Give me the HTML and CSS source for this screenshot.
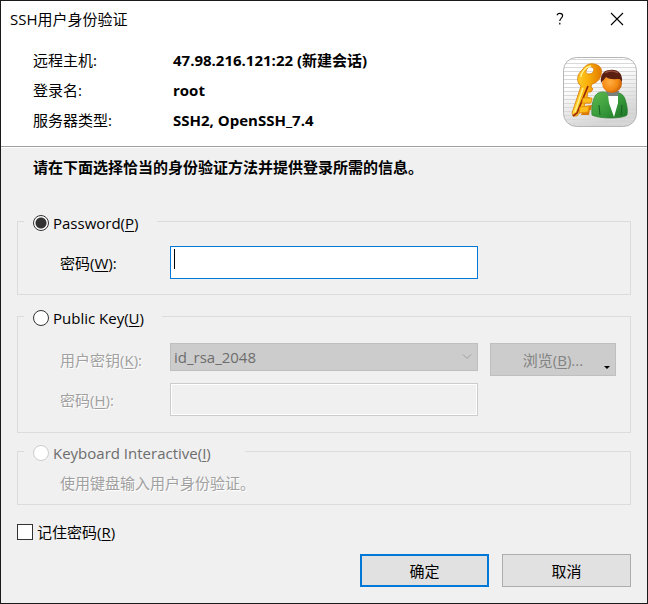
FILE: index.html
```html
<!DOCTYPE html>
<html lang="zh-CN">
<head>
  <meta charset="UTF-8">
  <meta name="viewport" content="width=device-width, initial-scale=1.0">
  <title>SSH用户身份验证</title>
  <link rel="stylesheet" href="styles.css">
</head>
<body>
  <form class="dialog">
    <header class="header">
      <div class="titlebar">
        <h1>SSH用户身份验证</h1>
        <button type="button" class="title-btn" aria-label="帮助">
          <svg width="14" height="14" viewBox="0 0 14 14" fill="none" stroke="#000" stroke-width="1.2">
            <path d="M4 3.2C4.4 2 5.4 1.3 6.8 1.3C8.6 1.3 9.6 2.3 9.6 3.8C9.6 6 6.8 6.4 6.8 9M6.8 10.8V12.4" />
          </svg>
        </button>
        <button type="button" class="title-btn" aria-label="关闭">
          <svg width="14" height="14" viewBox="0 0 14 14" fill="none" stroke="#000" stroke-width="1.1">
            <path d="M1 1L13 13M13 1L1 13" />
          </svg>
        </button>
      </div>
      <div class="summary">
        <dl class="info">
          <dt>远程主机:</dt>
          <dd>47.98.216.121:22 (新建会话)</dd>
          <dt>登录名:</dt>
          <dd>root</dd>
          <dt>服务器类型:</dt>
          <dd>SSH2, OpenSSH_7.4</dd>
        </dl>
        <svg class="auth-icon" width="74" height="70" viewBox="0 0 74 70" aria-hidden="true">
          <defs>
            <linearGradient id="tile" x1="0" y1="0" x2="0.4" y2="1">
              <stop offset="0.4" stop-color="#fff" />
              <stop offset="1" stop-color="#d4d4d4" />
            </linearGradient>
            <pattern id="lines" width="4" height="4" patternUnits="userSpaceOnUse">
              <rect width="4" height="1" y="2" fill="#d9d9d9" />
            </pattern>
            <linearGradient id="gold" x1="0" y1="0" x2="1" y2="0">
              <stop offset="0" stop-color="#ffd83a" />
              <stop offset="0.5" stop-color="#fbb40c" />
              <stop offset="1" stop-color="#e37a00" />
            </linearGradient>
            <radialGradient id="face" cx="0.4" cy="0.45" r="0.65">
              <stop offset="0" stop-color="#ffad42" />
              <stop offset="0.6" stop-color="#f48a12" />
              <stop offset="1" stop-color="#b9570a" />
            </radialGradient>
            <linearGradient id="coat" x1="0" y1="0" x2="1" y2="1">
              <stop offset="0" stop-color="#5fba4e" />
              <stop offset="0.5" stop-color="#399c3c" />
              <stop offset="1" stop-color="#1d7428" />
            </linearGradient>
          </defs>
          <rect x="0.5" y="0.5" width="73" height="69" rx="13" fill="url(#tile)" />
          <rect x="1" y="1" width="72" height="68" rx="12" fill="url(#lines)" />
          <rect x="0.5" y="0.5" width="73" height="69" rx="13" fill="none" stroke="#b5b5b5" />
          <!-- key -->
          <path fill="#dc7a06" d="M22 49L29 48L28 53L21 54ZM20 53L27 52L26 58L18 58Z" />
          <path fill="url(#gold)" stroke="#d97a08" stroke-width="0.8" fill-rule="evenodd" d="M20 12C22 8 27 6 31 7C37 8 40 12 38 18C37 23 33 26 29 27L28 30L30 32L28 35L25 35L24 40L27 41L28 42L27 46L22 46L21 50L25 51L23 56L17 55L14 59L10 59L9 56L18 29C15 27 14 23 15 19C16 16 18 14 20 12ZM24 12C22 15 23 17 26 17C30 17 32 13 30 11C28 9 26 9 24 12Z" />
          <path fill="none" stroke="#fff08a" stroke-width="1.4" d="M18 20C18 16 22 10 28 9M20 31L12 55" />
          <path fill="none" stroke="#9d2c06" stroke-width="1.8" d="M25 29L14 56L10 59" />
          <path fill="#ffbe1c" stroke="#e18a05" stroke-width="0.8" d="M20 41H29L28 46L19 46ZM17 50L26 49L25 55L16 56Z" />
          <!-- person -->
          <path fill="url(#coat)" stroke="#2c7c31" stroke-width="0.7" d="M29 58C28 50 30 39 35 36C39 34 44 35 48 37C54 34 60 36 62 42C64 48 65 53 64 58C60 62 36 62 29 58Z" />
          <path fill="#fff" d="M45 38L55 38L55 46L51 60L46 46Z" />
          <path fill="#77807c" d="M43 34L56 34L55 39L45 39Z" />
          <path fill="none" stroke="#185e22" stroke-width="1" d="M36 48L37 58M59 48L58 58" />
          <circle cx="49" cy="26" r="10" fill="url(#face)" />
          <path fill="#5b1f12" d="M38 26C37 17 41 13 47 13C55 12 60 17 59 25L57 22C53 22 46 23 43 20C42 22 40 23 38 26Z" />
          <path fill="none" stroke="#92503c" stroke-width="1.5" d="M42 16C46 13 52 14 55 16" />
        </svg>
      </div>
    </header>

    <main class="content">
      <p class="prompt">请在下面选择恰当的身份验证方法并提供登录所需的信息。</p>

      <fieldset class="group">
        <legend>
          <label><input type="radio" name="method" checked>Password(<u>P</u>)</label>
        </legend>
        <div class="fields">
          <label for="password">密码(<u>W</u>):</label>
          <div class="focused"><input type="password" id="password"></div>
        </div>
      </fieldset>

      <fieldset class="group key-group">
        <legend>
          <label><input type="radio" name="method">Public Key(<u>U</u>)</label>
        </legend>
        <div class="fields">
          <label class="disabled" for="userkey">用户密钥(<u>K</u>):</label>
          <select id="userkey" disabled>
            <option>id_rsa_2048</option>
          </select>
          <button type="button" class="browse" disabled>浏览(<u>B</u>)...</button>
          <label class="disabled" for="passphrase">密码(<u>H</u>):</label>
          <input type="password" id="passphrase" disabled>
        </div>
      </fieldset>

      <fieldset class="group keyboard-group">
        <legend>
          <label class="muted"><input type="radio" name="method" disabled>Keyboard Interactive(<u>I</u>)</label>
        </legend>
        <p class="disabled">使用键盘输入用户身份验证。</p>
      </fieldset>

      <label class="remember"><input type="checkbox">记住密码(<u>R</u>)</label>

      <div class="actions">
        <button type="submit" class="primary">确定</button>
        <button type="button">取消</button>
      </div>
    </main>
  </form>
</body>
</html>
```
FILE: styles.css
```css
:root {
  --accent: #0078d7;
  --face: #f0f0f0;
  --line: #dcdcdc;
}

* {
  margin: 0;
  padding: 0;
  box-sizing: border-box;
}

body,
input,
select,
button {
  font-family: "Open Sans", "Noto Sans CJK SC", sans-serif;
  font-size: 15px;
  line-height: 20px;
  color: #000;
}

u {
  text-underline-offset: 2px;
}

.dialog {
  display: flex;
  flex-direction: column;
  min-height: 100vh;
  border: 1px solid #1a1a1a;
  background: var(--face);
}

/* header */
.header {
  background: #fff;
  border-bottom: 1px solid #a0a0a0;
  padding-bottom: 11px;
}

.titlebar {
  display: flex;
  align-items: center;
  height: 36px;
  padding: 0 2px 0 9px;
}

.titlebar h1 {
  flex: 1;
  font-size: 15px;
  font-weight: 400;
}

.title-btn {
  display: flex;
  align-items: center;
  justify-content: center;
  width: 57px;
  height: 36px;
  border: none;
  background: none;
}

.summary {
  display: flex;
  justify-content: space-between;
  align-items: flex-end;
  padding: 8px 10px 0 32px;
}

.info {
  display: grid;
  grid-template-columns: 140px auto;
  line-height: 30px;
}

.info dd {
  font-weight: 700;
}

.auth-icon {
  margin-bottom: 8px;
}

/* body */
.content {
  flex: 1;
  display: flex;
  flex-direction: column;
  padding: 9px 16px 16px;
  border-top: 1px solid #fff;
}

.prompt {
  padding-left: 16px;
  margin-bottom: 32px;
  font-weight: 700;
}

.group {
  min-width: 0;
  border: 1px solid var(--line);
  padding: 13px 14px 15px 42px;
}

.group legend {
  height: 24px;
  margin-left: -36px;
  padding: 4px 18px 0 9px;
}

.group legend label,
.remember {
  display: block;
}

.key-group {
  margin-top: 9px;
  padding: 15px 14px 16px 42px;
}

.keyboard-group {
  margin-top: 6px;
  padding: 10px 14px 11px 42px;
}

.keyboard-group legend {
  padding-right: 34px;
}

.fields {
  display: grid;
  grid-template-columns: 110px 1fr 138px;
  row-gap: 7px;
  align-items: center;
}

.disabled {
  color: #a0a0a0;
  text-shadow: 1px 1px 0 #fff;
}

.muted {
  color: #6d6d6d;
}

input[type="password"],
select {
  width: 100%;
  height: 33px;
  padding: 0 3px;
  border: 1px solid #7a7a7a;
  border-radius: 0;
  outline: none;
  background: #fff;
}

.focused {
  position: relative;
}

.focused input[type="password"] {
  display: block;
  border-color: var(--accent);
  caret-color: transparent;
}

/* text cursor */
.focused::after {
  content: "";
  position: absolute;
  left: 4px;
  top: 3px;
  width: 1px;
  height: 20px;
  background: #000;
}

input[type="password"]:disabled {
  border-color: #ccc;
  background: var(--face);
  box-shadow: inset 0 0 0 1px #fff;
}

select {
  appearance: none;
  align-self: start;
  height: 28px;
}

select:disabled {
  border-color: #bfbfbf;
  background: #ccc url("data:image/svg+xml,%3Csvg xmlns='http://www.w3.org/2000/svg' width='10' height='6'%3E%3Cpath d='M1 .5L5 4.5L9 .5' fill='none' stroke='%23a0a0a0'/%3E%3C/svg%3E") no-repeat right 5px center;
  color: #6d6d6d;
  opacity: 1;
}

input[type="radio"],
input[type="checkbox"] {
  appearance: none;
  width: 16px;
  height: 16px;
  margin-right: 4px;
  border: 1px solid #333;
  background: #fff;
  vertical-align: -2px;
}

input[type="radio"] {
  border-radius: 50%;
}

input[type="radio"]:checked {
  background: radial-gradient(circle, #333 5px, #fff 6px);
}

input[type="radio"]:disabled {
  border-color: #ccc;
}

.remember {
  align-self: flex-start;
  margin-top: 17px;
}

/* buttons */
.actions {
  display: flex;
  justify-content: flex-end;
  gap: 13px;
  margin-top: auto;
}

.actions button {
  width: 129px;
  height: 33px;
  border: 1px solid #adadad;
  background: #e1e1e1;
}

.actions .primary {
  border: 2px solid var(--accent);
}

.browse {
  position: relative;
  height: 33px;
  margin-left: 12px;
  border: 1px solid #bfbfbf;
  background: #ccc;
  color: #838383;
}

.browse::after {
  content: "";
  position: absolute;
  right: 5px;
  bottom: 6px;
  border: 3px solid transparent;
  border-top-color: #000;
  border-bottom: none;
}
```
